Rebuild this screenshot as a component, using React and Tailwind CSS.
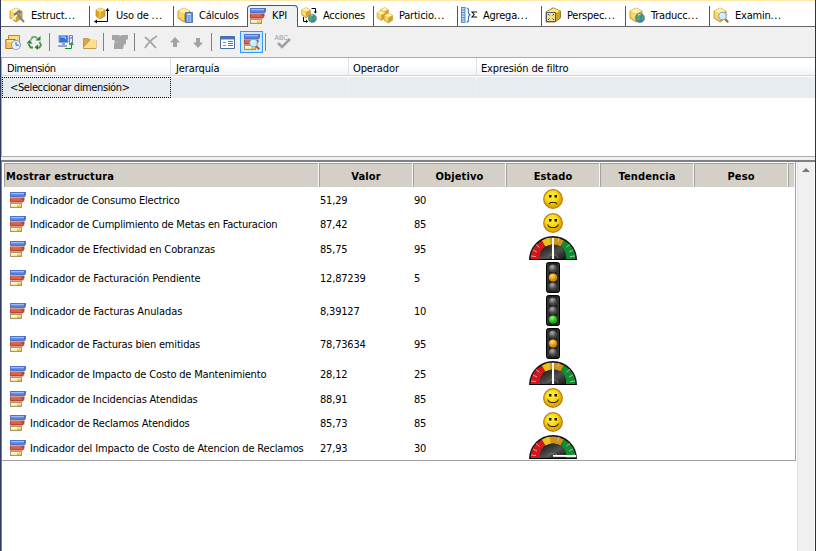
import React from "react";

const Cube = () => (
  <g>
    <path d="M1 4 7 1l6 3v7l-6 4-6-4z" fill="#e0ad27" stroke="#b98a25" strokeWidth=".8" />
    <path d="M1 4 7 1l6 3-6 3z" fill="#fff2a5" />
    <path d="M1.500 4.500 7 7v7l-5.500-3.500z" fill="#f7d76b" />
    <path d="M12.500 4.500 7 7v7l5.500-3.500z" fill="#d9a02a" />
  </g>
);
const Lens = () => (
  <g>
    <path d="m12 12 3.200 3.200" stroke="#8a6a3a" strokeWidth="2" />
    <circle cx="9.500" cy="9" r="3.800" fill="#c7efff" stroke="#8fa5b8" strokeWidth="1.100" />
    <path d="M7.500 8.500a2 2 0 0 1 2-1.600" stroke="#fff" fill="none" />
  </g>
);
const Globe = () => (
  <g>
    <circle cx="11" cy="11" r="4.600" fill="#3d7fc9" stroke="#5578a0" strokeWidth=".6" />
    <path d="M7.500 9c2-3 4-2.500 5-1l-2 2 1 2-2 2c-2-1-2-3-2-5zM13 9l2 1-1 3-1.500-1z" fill="#55b04b" />
    <path d="M9 8.200q1-1 2.500-.8" stroke="#d9f2ff" fill="none" />
  </g>
);
const Bars = () => (
  <g>
    <path d="M0 0h16v3l-1 2H0z" fill="#4d74cc" />
    <path d="M1 1h13v1H1z" fill="#9fbcf8" />
    <path d="M1 2h13v1.500H1z" fill="#6690e6" />
    <path d="M0 5.500h14.500V8L13 10.500H0z" fill="#b8452f" />
    <path d="M1 6.500h10v1H1z" fill="#f0937c" />
    <path d="M1 7.500h11.500V9H1z" fill="#dd6048" />
    <path d="M0 11h12v5H0z" fill="#a8966a" />
    <path d="M1 12h10v3H1z" fill="#f6e6a4" />
    <path d="M1 12h6v1.500H1z" fill="#fffbe6" />
    <path d="M7 13.500h4V15H7z" fill="#e6bf3c" />
  </g>
);

const art = {
  structure: <g><Cube /><path d="m8 7 7 8" stroke="#7c8794" strokeWidth="2" /><path d="m5 8 5-4 2 2" fill="none" stroke="#6d757f" strokeWidth="1.800" /><path d="m8 8-5 5" stroke="#fff" strokeWidth="1.500" /></g>,
  usage: <g><path d="M2 3 6 1l5 2v6l-5 3-4-3z" fill="#dfa51f" stroke="#b98a25" strokeWidth=".7" /><path d="m2 3 4-2 5 2-5 2z" fill="#ffe57c" /><path d="M6 5v6" stroke="#fbd35b" /><path d="M1 14.500h12.500V3" fill="none" stroke="#000" /><path d="m0 14.500 3-2v4zM13.500 1l-2 3h4z" /></g>,
  calc: <g><Cube /><rect x="8.500" y="5.500" width="7" height="10" fill="#5a8ce0" stroke="#4468b4" strokeWidth=".8" /><path d="M10 7.500h4" stroke="#d9e9ff" strokeWidth="1.500" /><path d="M10 10h4m-4 2h4m-4 2h4" stroke="#e6f0ff" strokeDasharray="1 .5" /></g>,
  kpi: <Bars />,
  actions: <g><g transform="scale(.72)"><Cube /></g><path d="M10.500 1.500h4v4M2.500 10v4.500h4" fill="none" stroke="#000" /><path d="m12.500 4.500 2 2 1.500-2zM5 12.500l2 2-2 1.500z" /><g transform="translate(1.500 1.500) scale(.9)"><Globe /></g></g>,
  partitions: <g><g transform="translate(3 0) scale(.65)"><Cube /></g><g transform="translate(-.5 3) scale(.7)"><Cube /></g><g transform="translate(6.500 5.500) scale(.7)"><Cube /></g></g>,
  aggregate: <g><rect x=".5" y=".5" width="3.500" height="15" fill="#bfe0ff" stroke="#3d78b8" strokeWidth=".8" /><path d="M.5 3h3.500M.5 5.500h3.500M.5 8h3.500M.5 10.500h3.500M.5 13h3.500" stroke="#3d78b8" strokeWidth=".8" /><path d="M5.500 1Q7.500 1 7.500 3v3.500L9 8 7.500 9.500V13q0 2-2 2" fill="none" stroke="#3d78c0" strokeWidth="1.200" /><path d="M15.500 5.500V5H11l2.200 2.500L11 10h4.500v-.5" fill="none" stroke="#111" strokeWidth="1.100" /></g>,
  perspective: <g><path d="M1 5 8 .8 15.500 4v7L10 15H1z" fill="#d5a020" stroke="#8c6915" strokeWidth=".8" /><path d="m1.500 5 7-3.800L15 4l-4.500 2z" fill="#ffe57c" /><path d="M1.500 5.500h9v9h-9z" fill="#f8e090" stroke="#4b5a68" /><path d="m3 7 1.500 1.500M9 7 7.500 8.500M3 13l1.500-1.500M9 13l-1.500-1.500" stroke="#28394a" /></g>,
  translate: <g><Cube /><Globe /></g>,
  browse: <g><Cube /><Lens /></g>,
  process: <g><path d="M3.500 1.500h11v9h-11z" fill="#ffdc75" stroke="#b48c35" /><path d="M.8 5.500h9.500v9H.8z" fill="#f6c25a" stroke="#a77b28" /><path d="M2 7h7" stroke="#fff2bc" strokeWidth="1.500" /><circle cx="11" cy="11" r="4.500" fill="#e8f1ff" stroke="#8aa2d0" strokeWidth="1.200" /><path d="M11 8v3.200h3" fill="none" stroke="#42629b" /></g>,
  refresh: <g fill="none" stroke="#4f9a4b" strokeWidth="1.800"><path d="M3.500 6.500 5.500 3h3l2 1.500" stroke="#7fae78" /><path d="m12.500 8 1.500 3-1.500 2.500H11" /><path d="M6 13.500H3.500L1.800 10" stroke="#3f8f3f" /><path d="M8.500 6.500h5V2zM11 10.500v5.500l-3.500-2.700zM-.500 9.500l3-3.500 3 3.500z" fill="#2b7d31" stroke="none" /></g>,
  connect: <g><path d="M1 1.500h9v7H1z" fill="#316ee0" stroke="#8fa3c4" /><path d="M2.500 3h5v2" fill="none" stroke="#bfe0ff" /><path d="M0 11h9v2H0zM4 8.500h3V11H4z" fill="#93a7c8" /><path d="M11.500 1.500h3v9h-3z" fill="#e4eaf4" stroke="#6d83ab" /><path d="M12 4h2" stroke="#557" /><path d="M7 14.500h6.500V10" fill="none" stroke="#138c28" /><path d="m13.500 8-2.500 3h5z" fill="#22a138" /></g>,
  folder: <g><path d="M1.500 14.500V4.500h5L8 6h6v8.500z" fill="#d9a54a" stroke="#c4994a" /><path d="M2 14 10 5h4v9z" fill="#ffe089" /><path d="m2 14 8.500-9H14" stroke="#fff5c8" fill="none" /></g>,
  kpiOff: <g fill="#a5a5a5"><path d="M0 1h7l1 1 2-1h6v4l-2 1v4l-2 1-1 4H2V9l1-1-1-2H0z" /><path d="M4 8h2m5 2h2" stroke="#bbb" /></g>,
  del: <path d="M2 3q5 4 11 11M14 2Q7 6 2 14" fill="none" stroke="#a6a6a6" strokeWidth="1.800" />,
  up: <path d="m8 3 5 5.500h-3V13H6V8.500H3z" fill="#a2a2a2" />,
  down: <path d="M8 14 3 8.500h3V4h4v4.500h3z" fill="#a2a2a2" />,
  form: <g><path d="M.5 2.500h14v12H.5z" fill="#fff" stroke="#466ba9" /><path d="M1 3h13v2.500H1z" fill="#3e74cb" /><path d="M3 8.500h3m-3 3h3" stroke="#788eb0" /><path d="M8 7.500h5m-5 2h5m-5 2h5" stroke="#5a75aa" /></g>,
  browserView: <g><Bars /><Lens /></g>,
  spell: <g><text x="-.5" y="5.800" fontSize="6.500" fontFamily="Liberation Sans, sans-serif" fill="#989898" textLength="13">ABC</text><path d="m3 9 4 4 8-8" fill="none" stroke="#a0a0a0" strokeWidth="2.600" /></g>,
};

const Icon = ({ name, className = "" }) => (
  <svg viewBox="0 0 16 16" className={`block size-4 shrink-0 overflow-visible ${className}`}>{art[name]}</svg>
);

const Tab = ({ icon, label, w, pad = "pl-1", gap = "gap-[6px]", more = true, last }) => (
  <div className={`flex h-5 shrink-0 items-center pb-[3px] ${last ? "" : "border-r border-[#555]"} ${w} ${pad} ${gap}`}>
    <Icon name={icon} />
    <span className="pt-[3px] tracking-[-0.22px]">{label}{more && <span className="tracking-[0.6px]">...</span>}</span>
  </div>
);

const Face = ({ sad }) => (
  <svg viewBox="0 0 20 20" className="block size-5">
    <defs>
      <radialGradient id="face" cx=".42" cy=".35"><stop offset="0" stopColor="#fff04a" /><stop offset=".7" stopColor="#f8d60c" /><stop offset="1" stopColor="#e0ac00" /></radialGradient>
    </defs>
    <circle cx="10" cy="10" r="9.300" fill="url(#face)" stroke="#c08018" strokeWidth="1.300" />
    <path d="M6 6h2.500v2.500H6zM11.500 6H14v2.500h-2.500z" fill="#1d1800" />
    {sad
      ? <path d="M6 15.200 7.500 13.500h5l1.500 1.700" fill="none" stroke="#302400" strokeWidth="1.100" />
      : <path d="M4.500 11.500 6 13.500l2 1h4l2-1 1.500-2" fill="none" stroke="#302400" strokeWidth="1.100" />}
  </svg>
);

const Light = ({ on }) => (
  <svg viewBox="0 0 14 31" className="block h-[31px] w-[14px]">
    <defs>
      <radialGradient id="lamp-off" cx=".4" cy=".3"><stop offset="0" stopColor="#b0b0b0" /><stop offset="1" stopColor="#444" /></radialGradient>
      <radialGradient id="lamp-amber" cx=".4" cy=".3"><stop offset="0" stopColor="#ffe080" /><stop offset="1" stopColor="#d88c00" /></radialGradient>
      <radialGradient id="lamp-green" cx=".4" cy=".3"><stop offset="0" stopColor="#8cff78" /><stop offset="1" stopColor="#18b418" /></radialGradient>
    </defs>
    <rect x=".5" y=".5" width="13" height="30" rx="2" fill="#202020" stroke="#000" />
    <path d="M2 2v27M12 2v27" stroke="#555" strokeWidth=".7" />
    <circle cx="7" cy="6.500" r="4.100" fill="url(#lamp-off)" />
    <circle cx="7" cy="15.500" r="4.100" fill={on === "amber" ? "url(#lamp-amber)" : "url(#lamp-off)"} />
    <circle cx="7" cy="24.500" r="4.100" fill={on === "green" ? "url(#lamp-green)" : "url(#lamp-off)"} />
  </svg>
);

const Gauge = ({ right }) => (
  <svg viewBox="0 0 48 24" className="block h-6 w-12">
    <defs>
      <linearGradient id="dial" x2="1" y2="1"><stop offset="0" stopColor="#111" /><stop offset=".55" stopColor="#505050" /><stop offset="1" stopColor="#151515" /></linearGradient>
    </defs>
    <path d="M0 24a24 24 0 0 1 48 0z" fill="#141414" />
    <path d="M1.500 23A22.500 21.500 0 0 1 13 4.500l3.500 6A14 14 0 0 0 11 23z" fill="#cf171e" />
    <path d="M13 4.500a22.500 21.500 0 0 1 22 0l-3.500 6a16 16 0 0 0-15 0z" fill="#d0921a" />
    <path d="M13 4.500q4-2 8-2.700l.5 7.200-5 1.500z" fill="#efc012" />
    <path d="M35 4.500A22.500 21.500 0 0 1 46.500 23H37a14 14 0 0 0-5.500-12.500z" fill="#118d31" />
    <path d="m2 20 5 .6M4 14l4 2M7 8.500l3.500 3M18 2l1.200 4M30 2l-1.200 4M41 8.500 37.500 11M44 14l-4 2M46 20l-5 .6" stroke="#cfc8b9" strokeWidth=".8" />
    <path d="M11 23a14 14 0 0 1 5.500-12.500 16 16 0 0 1 15 0A14 14 0 0 1 37 23z" fill="url(#dial)" />
    <path d="M19 22a5 3.500 0 0 1 10 0" fill="none" stroke="#758575" strokeWidth=".8" />
    <path d={right ? "M24 20h23v2l-23-.3z" : "M23 2h2v21h-2z"} fill="#fff" />
    <path d="M.5 23.500h47" stroke="#000" />
  </svg>
);

const status = {
  sad: <Face sad />, happy: <Face />, mid: <Gauge />, full: <Gauge right />,
  amber: <Light on="amber" />, green: <Light on="green" />,
};
const rows = [
  ["Indicador de Consumo Electrico", "51,29", "90", "sad", "h-6", "tracking-[-0.25px]"],
  ["Indicador de Cumplimiento de Metas en Facturacion", "87,42", "85", "happy", "h-6", "tracking-[-0.22px]"],
  ["Indicador de Efectividad en Cobranzas", "85,75", "95", "mid", "h-[26px]", "tracking-[-0.15px]"],
  ["Indicador de Facturación Pendiente", "12,87239", "5", "amber", "h-[33px]", "tracking-[-0.11px]"],
  ["Indicador de Facturas Anuladas", "8,39127", "10", "green", "h-[33px]", "tracking-[-0.1px]"],
  ["Indicador de Facturas bien emitidas", "78,73634", "95", "amber", "h-[33px]", "tracking-[-0.19px]"],
  ["Indicador de Impacto de Costo de Mantenimiento", "28,12", "25", "mid", "h-[26px]", "tracking-[-0.19px]"],
  ["Indicador de Incidencias Atendidas", "88,91", "85", "happy", "h-6", "tracking-[-0.15px]"],
  ["Indicador de Reclamos Atendidos", "85,73", "85", "happy", "h-6", "tracking-[-0.17px]"],
  ["Indicador del Impacto de Costo de Atencion de Reclamos", "27,93", "30", "full", "h-[26px]", "tracking-[-0.17px]"],
];

const Sep = ({ className }) => <div className={`h-[18px] w-px shrink-0 bg-[#808080] ${className}`} />;
const Head = ({ w, children, className = "justify-center" }) => (
  <div className={`flex h-6 shrink-0 items-center border-l border-t border-[#a0a0a0] bg-[#d4d0c8] pt-[2px] ${w} ${className}`}>{children}</div>
);

export default function App() {
  return (
    <div className="flex h-[551px] w-[816px] overflow-hidden border-l border-l-[#2c3c62] border-r border-r-[#26344e] bg-[#f0f0f0] font-['DejaVu_Sans_Condensed','DejaVu_Sans',sans-serif] text-[11px] leading-[14px] tracking-[-0.45px] whitespace-nowrap text-black [font-stretch:condensed]">
      <div className="flex w-[814px] flex-col">
        <div className="h-px bg-[#ffe8a6]" />
        <nav className="flex h-[26px] items-end bg-white">
          <div className="flex h-[26px] w-[246px] items-end border-b border-[#666]">
            <Tab icon="structure" label="Estruct" w="w-[89px]" pad="pl-2" />
            <Tab icon="usage" label="Uso de  " w="w-[84px]" gap="gap-[6px]" />
            <Tab icon="calc" label="Cálculos" w="w-[73px]" pad="pl-[3px]" more={false} last />
          </div>
          <div className="flex h-[22px] w-[51px] items-center gap-[6px] rounded-t border border-b-0 border-[#555] bg-[#f0f0f0] pb-[2px] pl-[2px]">
            <Icon name="kpi" /><span className="pt-px tracking-[-0.1px]">KPI</span>
          </div>
          <div className="flex h-[26px] w-[517px] items-end border-b border-[#666]">
            <Tab icon="actions" label="Acciones" w="w-[76px]" pad="pl-[3px]" more={false} />
            <Tab icon="partitions" label="Particio" w="w-[84px]" pad="pl-[3px]" />
            <Tab icon="aggregate" label="Agrega" w="w-[84px]" pad="pl-[3px]" />
            <Tab icon="perspective" label="Perspec" w="w-[84px]" pad="pl-[3px]" />
            <Tab icon="translate" label="Traducc" w="w-[84px]" pad="pl-[3px]" />
            <Tab icon="browse" label="Examin" w="w-[100px]" pad="pl-[3px]" last />
          </div>
        </nav>
        <div className="flex h-[30px] items-center">
          <Icon name="process" className="ml-1" />
          <Icon name="refresh" className="ml-[6px]" />
          <Sep className="ml-[6px]" />
          <Icon name="connect" className="ml-2" />
          <Icon name="folder" className="ml-2" />
          <Sep className="ml-[5px]" />
          <Icon name="kpiOff" className="ml-2" />
          <Sep className="ml-[6px]" />
          <Icon name="del" className="ml-2" />
          <Icon name="up" className="ml-2" />
          <Icon name="down" className="ml-[7px]" />
          <Sep className="ml-[5px]" />
          <Icon name="form" className="ml-2" />
          <div className="ml-1 flex h-[22px] w-[23px] items-center justify-center border border-[#3399ff] bg-[#d5e6f7]"><Icon name="browserView" /></div>
          <Sep className="ml-[2px]" />
          <Icon name="spell" className="ml-[9px]" />
        </div>
        <section className="h-[100px] border-y border-l border-[#a9abb1] bg-white tracking-[-0.3px]">
          <div className="flex h-[18px] border-b border-[#d5d5d5] bg-linear-to-b from-white from-40% to-[#f2f3f5]">
            <div className="w-[169px] border-r border-[#dedfe1] pt-1 pl-[5px] tracking-[-0.45px]">Dimensión</div>
            <div className="w-[178px] border-r border-[#dedfe1] pt-1 pl-[5px] tracking-[-0.1px]">Jerarquía</div>
            <div className="w-[128px] border-r border-[#dedfe1] pt-1 pl-[4px] tracking-[-0.1px]">Operador</div>
            <div className="pt-1 pl-[4px] tracking-[-0.13px]">Expresión de filtro</div>
          </div>
          <div className="mt-px flex h-[21px] bg-[#e7ecf0]">
            <div className="flex w-[169px] items-center border border-dotted border-black pl-[7px] tracking-[-0.38px]">&lt;Seleccionar dimensión&gt;</div>
            <div className="w-[178px] border-r border-[#f0f0f0]" />
            <div className="w-[128px] border-r border-[#f0f0f0]" />
          </div>
        </section>
        <section className="mt-[3px] flex h-[391px] border-l border-t-2 border-[#808080] bg-white">
          <div className="mr-px h-[299px] w-[794px] border-r border-b border-[#a0a0a0] pl-[2px] pt-px">
            <div className="flex gap-px bg-[#f6f6f4] font-bold tracking-[0.13px]">
              <Head w="w-[314px]" className="pl-px">Mostrar estructura</Head>
              <Head w="w-[93px]">Valor</Head>
              <Head w="w-[92px]">Objetivo</Head>
              <Head w="w-[93px]">Estado</Head>
              <Head w="w-[93px]">Tendencia</Head>
              <Head w="w-[93px]">Peso</Head>
              <Head w="w-[6px]" />
            </div>
            {rows.map(([name, value, goal, state, height, tracking]) => (
              <div key={name} className={`flex items-center ${height}`}>
                <div className="flex w-[316px] items-center gap-1 pt-px pl-[6px]"><Icon name="kpi" /><span className={`pt-[2px] ${tracking}`}>{name}</span></div>
                <div className="w-[94px] pt-[3px] tracking-[-0.2px]">{value}</div>
                <div className="w-[92px] pt-[3px] tracking-[-0.2px]">{goal}</div>
                <div className="flex w-[94px] justify-center">{status[state]}</div>
              </div>
            ))}
          </div>
          <div className="flex w-[17px] justify-center border-l border-[#e3e3e3] bg-[#f0f0f0] pt-[6px]">
            <svg viewBox="0 0 8 4" className="h-1 w-2"><path d="m0 4 4-4 4 4z" fill="#777" /></svg>
          </div>
        </section>
      </div>
    </div>
  );
}
